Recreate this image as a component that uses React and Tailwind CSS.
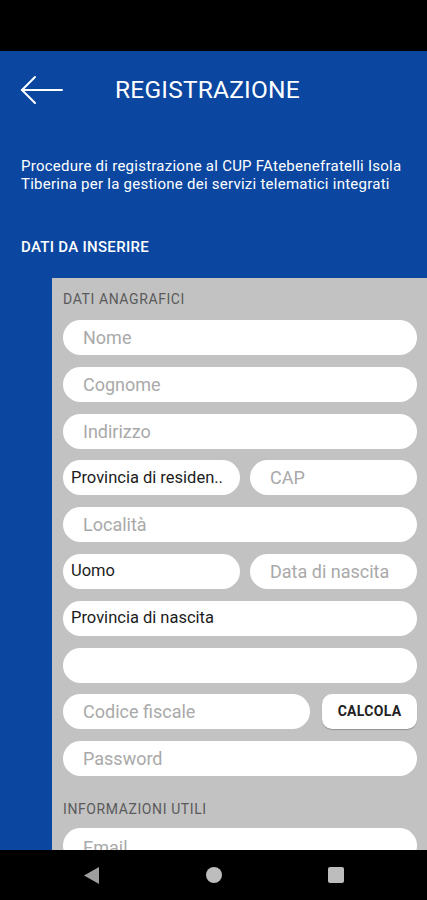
import React from 'react'

const font = { fontFamily: 'Roboto, "Noto Sans", sans-serif' }

function Field({ placeholder, value, className = '' }) {
  return (
    <div className={`h-[35px] bg-white rounded-full flex items-center shrink-0 ${value ? 'pl-2' : 'pl-5'} ${className}`}>
      {value
        ? <span className="text-[16.5px] text-[#1c1c1c] truncate">{value}</span>
        : <span className="text-[18px] text-[#a9a9a9]">{placeholder}</span>}
    </div>
  )
}

export default function App() {
  return (
    <div className="w-[427px] h-[900px] flex flex-col bg-black overflow-hidden" style={font}>
      <div className="h-[51px] bg-black shrink-0" />

      <div className="flex-1 bg-[#0b47a1] overflow-hidden flex flex-col">
        {/* header */}
        <div className="h-[78px] flex items-center shrink-0">
          <svg className="ml-[20px] w-[44px] h-[30px]" viewBox="0 0 44 30" fill="none" stroke="white" strokeWidth="2" strokeLinecap="round">
            <path d="M2 15 H42" />
            <path d="M15 2 L2 15 L15 28" />
          </svg>
          <h1 className="ml-[51px] text-white text-[24.5px] leading-none tracking-[0.2px]">REGISTRAZIONE</h1>
        </div>

        <p className="mt-[28px] px-[21px] text-white text-[15px] tracking-[0.25px] leading-[18px]">
          Procedure di registrazione al CUP FAtebenefratelli Isola Tiberina per la gestione dei servizi telematici integrati
        </p>

        <div className="mt-[45px] px-[21px] text-white text-[15px] font-medium tracking-[0.3px] leading-[18px]">DATI DA INSERIRE</div>

        {/* form panel */}
        <div className="mt-[22px] ml-[52px] flex-1 bg-[#c2c2c2] pl-[11px] pr-[10px] flex flex-col overflow-hidden">
          <div className="mt-[13px] text-[14px] text-[#5a5a5a] tracking-[0.6px] leading-[16px]">DATI ANAGRAFICI</div>
          <div className="mt-[13px] flex flex-col gap-[11.8px]">
            <Field placeholder="Nome" />
            <Field placeholder="Cognome" />
            <Field placeholder="Indirizzo" />
            <div className="flex gap-[10px]">
              <Field value="Provincia di residen.." className="w-[177px]" />
              <Field placeholder="CAP" className="flex-1" />
            </div>
            <Field placeholder="Località" />
            <div className="flex gap-[10px]">
              <Field value="Uomo" className="w-[177px]" />
              <Field placeholder="Data di nascita" className="flex-1" />
            </div>
            <Field value="Provincia di nascita" />
            <Field placeholder="" />
            <div className="flex gap-[12px] items-center">
              <Field placeholder="Codice fiscale" className="w-[247px]" />
              <button className="h-[35px] flex-1 bg-white rounded-[10px] text-[14px] font-bold text-[#222] tracking-[0.3px] shadow-[0_1px_1px_rgba(0,0,0,0.25)]">
                CALCOLA
              </button>
            </div>
            <Field placeholder="Password" />
          </div>
          <div className="mt-[25px] text-[14px] text-[#5a5a5a] tracking-[0.6px] leading-[16px]">INFORMAZIONI UTILI</div>
          <div className="mt-[11px] flex flex-col">
            <Field placeholder="Email" className="items-start pt-[6px]" />
          </div>
        </div>
      </div>

      {/* android nav bar */}
      <div className="h-[50px] bg-black shrink-0 flex items-center justify-center gap-[106px]">
        <svg width="17" height="19" viewBox="0 0 17 19"><path d="M16 1 L1 9.5 L16 18 Z" fill="#9e9e9e" /></svg>
        <div className="w-[16px] h-[16px] rounded-full bg-[#bdbdbd]" />
        <div className="w-[16px] h-[16px] rounded-[2px] bg-[#bdbdbd]" />
      </div>
    </div>
  )
}
